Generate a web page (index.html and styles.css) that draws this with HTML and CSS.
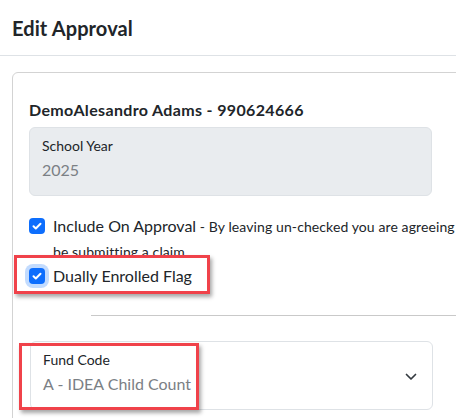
FILE: index.html
```html
<!DOCTYPE html>
<html lang="en">
<head>
<meta charset="utf-8">
<title>Edit Approval</title>
<link rel="stylesheet" href="styles.css">
</head>
<body>
<header class="modal-header">
  <h5 class="modal-title">Edit Approval</h5>
</header>
<main class="modal-body">
  <section class="card">
    <div class="card-body">
      <h6 class="student">DemoAlesandro Adams - 990624666</h6>
      <div class="field field-disabled">
        <span class="field-label">School Year</span>
        <span class="field-value">2025</span>
      </div>
      <div class="check">
        <span class="box">
          <svg viewBox="0 0 16 16" width="16" height="16"><path d="M4.5 8.3l2.3 2.2 4.7-4.8" fill="none" stroke="#fff" stroke-width="2" stroke-linecap="round" stroke-linejoin="round"/></svg>
        </span>
        <div class="check-text"><span class="check-label">Include On Approval</span><span class="hint"> - By leaving un-checked you are agreeing to not<br>be submitting a claim.</span></div>
      </div>
      <div class="check check-marked">
        <span class="box box-focus">
          <svg viewBox="0 0 16 16" width="16" height="16"><path d="M4.5 8.3l2.3 2.2 4.7-4.8" fill="none" stroke="#fff" stroke-width="2" stroke-linecap="round" stroke-linejoin="round"/></svg>
        </span>
        <div class="check-text"><span class="check-label">Dually Enrolled Flag</span></div>
      </div>
      <hr class="divider">
      <div class="select-wrap">
        <div class="field field-select">
          <span class="field-label">Fund Code</span>
          <span class="field-value">A - IDEA Child Count</span>
          <svg class="chevron" viewBox="0 0 12 8" width="12" height="8"><path d="M1.5 1.5l4.5 4.5 4.5-4.5" fill="none" stroke="#343a40" stroke-width="1.7" stroke-linecap="round" stroke-linejoin="round"/></svg>
        </div>
        <span class="mark-box"></span>
      </div>
    </div>
  </section>
</main>
</body>
</html>
```

FILE: styles.css
```css
html, body {
  margin: 0;
  padding: 0;
}
body {
  width: 456px;
  height: 418px;
  overflow: hidden;
  background: #fff;
  color: #212529;
  font-family: Lato, "Noto Sans", "Liberation Sans", sans-serif;
  font-size: 16px;
  line-height: 24px;
}
.modal-header {
  height: 56px;
  padding: 0 12px;
  display: flex;
  align-items: center;
  border-bottom: 1px solid #dee2e6;
  box-sizing: border-box;
}
.modal-title {
  margin: 0;
  font-size: 20px;
  font-weight: 700;
  line-height: 24px;
  letter-spacing: 0.1px;
}
.modal-body {
  padding: 16px 0 0 12px;
}
.card {
  width: 620px;
  border: 1px solid #d3d3d3;
  border-radius: 6px;
  min-height: 400px;
}
.card-body {
  padding: 25px 16px 0 16px;
}
.student {
  margin: 0 0 5px 0;
  font-size: 16px;
  font-weight: 700;
  line-height: 24px;
  letter-spacing: 0.35px;
}
.field {
  width: 403px;
  height: 69px;
  box-sizing: border-box;
  border: 1px solid #dee2e6;
  border-radius: 6px;
  padding: 7px 12px 0 12px;
  display: flex;
  flex-direction: column;
  position: relative;
}
.field-disabled {
  background: #e9ecef;
}
.field-label {
  font-size: 14px;
  line-height: 22px;
  color: #212529;
}
.field-value {
  font-size: 16px;
  line-height: 26px;
  color: #7b8085;
}
.check {
  display: flex;
  gap: 8px;
  align-items: flex-start;
}
.field-disabled + .check {
  margin-top: 18px;
}
.box {
  width: 16px;
  height: 16px;
  flex: 0 0 16px;
  margin-top: 4px;
  border-radius: 4px;
  background: #0d6efd;
  display: flex;
}
.box-focus {
  box-shadow: 0 0 0 4px rgba(13, 110, 253, 0.25);
}
.check-text {
  line-height: 24px;
  white-space: nowrap;
}
.check-label {
  font-size: 16px;
}
.hint {
  font-size: 14px;
  letter-spacing: 0.1px;
}
.check-marked {
  width: fit-content;
  position: relative;
  z-index: 1;
}
.check-marked::before {
  content: "";
  position: absolute;
  left: -15px;
  right: -18px;
  top: -9px;
  bottom: -6px;
  background: #fff;
  border: 3px solid #f0424a;
  box-shadow: 2px 3px 4px rgba(0, 0, 0, 0.35);
  z-index: -1;
}
.divider {
  margin: 27px 0 25px 62px;
  border: 0;
  border-top: 1px solid #c9c9c9;
  height: 0;
}
.select-wrap {
  position: relative;
  width: 403px;
  margin-left: 1px;
}
.field-select {
  background: #fff;
  width: 403px;
}
.chevron {
  position: absolute;
  right: 15px;
  top: 31px;
}
.mark-box {
  position: absolute;
  left: -11px;
  top: 2px;
  width: 180px;
  height: 67px;
  box-sizing: border-box;
  border: 3px solid #f0424a;
  box-shadow: 2px 3px 4px rgba(0, 0, 0, 0.35);
}
```
